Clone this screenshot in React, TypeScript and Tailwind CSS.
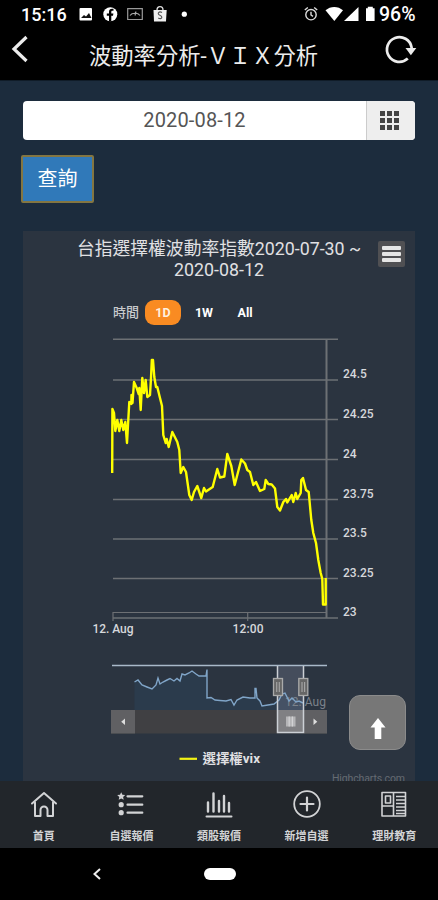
import type { ReactNode } from "react";

const VIX_LINE =
  "112.2,473 112.4,409 114,413 115.3,431 117.3,420 119.3,431 121.3,420 123.3,430 125.3,422 127,443 128,425 129.3,402 131.3,404 131.5,395 132.5,403 134,382 136.7,388 138.7,394 139.3,388 140.7,410 142.3,378 144,393 145.7,380 147.3,397 150,395 151,378 151.8,360 153,360 154.3,377 156,387 157.3,387 160,398 162,406 163.3,435 165.7,443 166.7,439 168.7,447 172.3,432 177.3,442 179.3,450 180.7,473 183.3,467 186,472 189.3,495 191.7,500 194,492 197.3,486 201.3,498 204,488 206,491.5 212.7,487 217.3,469 220,477.5 224.3,476.5 227.3,454 231.3,466 234.7,485 241.3,459.5 245,463.5 247.3,470 250,472 253.3,485 256,482 260,491 264.3,489 265.7,480 268.3,484 271.7,484.5 275,488.5 277.3,507 280,510.5 283.3,502 286,499 287.3,502.5 291.7,495 293.3,502 295.7,493 297.3,499 300.7,493 301.3,480 303,478 306,490 308.7,492 311.3,520 313.3,533 316,543 318.3,560 320.7,573 322.3,579 323,604.5 325.7,604.5 325.7,578";

const NAVIGATOR_LINE =
  "134.5,682 138,680 142,685 147,687 152,689 156,685 158,678 160,684 163,682 167,680 170,678.5 174,681 177,678.5 180,681 182,674 185,675 189,673 192,671 196,674 199,676 206,676 207,669.5 207,698 211,697.5 215,700 220,700.5 226,701 231,699.5 234,705 237,700 243,697 250,698 255,698 255,688.5 256,688.5 257,698 260,701 262,706 268,705 274,704 279,700 282,694 285,693 289,701 292,698 296,702 299,701 303,703";

const Y_AXIS = [
  { label: "24.5", y: 380 },
  { label: "24.25", y: 419.5 },
  { label: "24", y: 459.5 },
  { label: "23.75", y: 499.5 },
  { label: "23.5", y: 539 },
  { label: "23.25", y: 578.5 },
  { label: "23", y: 618 },
];

const stroke = { fill: "none", stroke: "currentColor", strokeLinecap: "round", strokeLinejoin: "round" } as const;

const TABS: { label: string; icon: ReactNode }[] = [
  {
    label: "首頁",
    icon: (
      <g {...stroke} strokeWidth="2">
        <path d="M3 13.5 15 3l12 10.5" />
        <path d="M6 12.5V26h5.5v-6a3.5 3.5 0 0 1 7 0v6H24V12.5" />
      </g>
    ),
  },
  {
    label: "自選報價",
    icon: (
      <g>
        <path d="m5.2 2.2 1.2 2.6 2.8.3-2.1 1.9.6 2.8-2.5-1.4-2.5 1.4.6-2.8-2.1-1.9 2.8-.3z" fill="currentColor" />
        <circle cx="5.2" cy="14.7" r="2.6" fill="currentColor" />
        <circle cx="5.2" cy="22.7" r="2.6" fill="currentColor" />
        <path d="M11.5 6.3h14.8M11.5 14.7h14.8M11.5 22.7h14.8" {...stroke} strokeWidth="2.2" />
      </g>
    ),
  },
  {
    label: "類股報價",
    icon: (
      <g {...stroke} strokeWidth="2.4">
        <path d="M4 21.5v-9M9.5 21.5V3.5M15 21.5V11M20 21.5V6M25 21.5V13" />
        <path d="M2.5 26.5h25" strokeWidth="2" />
      </g>
    ),
  },
  {
    label: "新增自選",
    icon: (
      <g {...stroke} strokeWidth="1.8">
        <circle cx="15" cy="14" r="12.8" />
        <path d="M15 7.5v13M8.5 14h13" strokeWidth="2.2" />
      </g>
    ),
  },
  {
    label: "理財教育",
    icon: (
      <g {...stroke} strokeLinecap="butt" strokeWidth="1.6">
        <path d="M3 2.5h23.5V26H3zM14.5 2.5V26" />
        <path d="M6.5 6h5v7h-5zM3 16h11.5" />
        <path d="M17 6.5h9M17 10h9M17 13.5h9M17 17h9M17 20.5h9M17 23.5h9" />
      </g>
    ),
  },
];

function StatusBar() {
  return (
    <div className="flex h-[30px] items-center pl-[21px] pr-[20px] text-white">
      <span className="w-[46px] whitespace-nowrap text-[18px] font-medium leading-[30px]">15:16</span>
      <svg className="ml-[9px]" width="115" height="20" viewBox="76 5 115 20">
        <rect x="79.5" y="8" width="12.5" height="12.5" rx="1" fill="#fff" />
        <path d="m81 18 3-3 2 1.5 3-3.5 2.5 5z" fill="#111" />
        <circle cx="110.3" cy="14.2" r="7" fill="#fff" />
        <path d="M109 21.5v-5.7h-2.2v-2.3h2.2v-1.6c0-2.1 1.2-3.2 3.1-3.2h1.4v2h-1.1c-.8 0-1.1.5-1.1 1.1v1.7h2.1l-.4 2.3h-1.7v5.7z" fill="#000" />
        <path d="M127.7 8.7h14.6v10.8h-14.6z" fill="none" stroke="#999" strokeWidth="1.2" />
        <path d="M130 15.5c2-3 8-3 10 0m-5 0 1-4" fill="none" stroke="#aaa" strokeWidth="1.1" />
        <path d="M153.5 10h13.2l-.7 11.5h-12z" fill="#eee" />
        <path d="M157 10c0-4.5 6-4.5 6 0" fill="none" stroke="#ddd" strokeWidth="1.3" />
        <path d="M162 12.5c-3-1.8-5.2 1-2.6 2.5 4 1.5 2.6 5-1.2 3" fill="none" stroke="#555" strokeWidth="1.1" />
        <circle cx="184.3" cy="14.2" r="2.6" fill="#fff" />
      </svg>
      <svg className="ml-auto" width="74" height="20" viewBox="302 5 74 20">
        <g fill="none" stroke="#ddd" strokeWidth="1.4">
          <circle cx="311" cy="14.7" r="5.2" />
          <path d="M311 11.8v3.2l2 1.4M304.8 10l3-2.5M317.2 10l-3-2.5" />
        </g>
        <path d="M325.5 10.3c5-4.5 12.5-4.5 17.5 0L334.3 21z" fill="#fff" />
        <path d="M358.5 7v14h-14.5z" fill="#fff" />
        <path d="M366 8.3h1.8V6.8h5v1.5h1.8V21H366z" fill="#fff" />
      </svg>
      <span className="ml-[3px] w-[39px] whitespace-nowrap text-[19.5px] font-medium leading-[30px]">96%</span>
    </div>
  );
}

function TitleBar() {
  return (
    <div className="flex h-[50px] items-start pl-[10px] text-[#ececec]">
      <svg className="mt-[3px]" width="22" height="32" viewBox="0 0 22 32">
        <path d="M16.5 4 4 16l12.5 12" fill="none" stroke="currentColor" strokeWidth="3.2" />
      </svg>
      <h1 className="ml-[57px] mt-[10px] w-[294px] whitespace-nowrap text-[22.3px] leading-[32px]">
        波動率分析-ＶＩＸ分析
      </h1>
      <svg className="mt-[4px]" width="34" height="32" viewBox="0 0 34 32">
        <path d="M24.8 24.6A12.4 12.4 0 1 1 28.6 13.5v3" fill="none" stroke="currentColor" strokeWidth="2.7" />
        <path d="M22.5 14h10.8l-5.4 7.2z" fill="currentColor" />
      </svg>
    </div>
  );
}

function VixChart() {
  return (
    <svg className="block" width="392" height="451" viewBox="23 330 392 451">
      {/* plot area */}
      <g stroke="#6d7074" strokeWidth="1.5">
        <path d="M113 339.3h225" />
        {Y_AXIS.map((tick) => (
          <path key={tick.label} d={`M113 ${tick.y}h225`} />
        ))}
        <path d="M326.5 339v279" strokeWidth="2" />
        <path d="M113 621v-8.5h213M247.7 612v9" fill="none" strokeWidth="1.2" />
      </g>
      <g fill="#d6d8dc" fontSize="12" fontWeight="500">
        {Y_AXIS.map((tick) => (
          <text key={tick.label} x="343" y={tick.y - 2}>
            {tick.label}
          </text>
        ))}
        <text x="92.5" y="633" textLength="41">12. Aug</text>
        <text x="232.5" y="633" textLength="31">12:00</text>
      </g>
      <polyline points={VIX_LINE} fill="none" stroke="#ffff00" strokeWidth="2.4" strokeLinejoin="round" />

      {/* navigator */}
      <polygon points={`134.5,710 ${NAVIGATOR_LINE} 303,710`} fill="#2b3b4c" />
      <path d="M112 665.5h215" stroke="#a9b9c9" strokeWidth="1.6" />
      <rect x="278" y="666" width="25.5" height="44" fill="#8087a0" opacity=".3" />
      <text x="285" y="706" fontSize="12" fill="#7b828b" textLength="41">12. Aug</text>
      <polyline points={NAVIGATOR_LINE} fill="none" stroke="#80a5c8" strokeWidth="1.4" />
      <rect x="111" y="710" width="216" height="23.5" fill="#404043" />
      <rect x="111" y="710" width="24" height="23.5" fill="#606063" />
      <rect x="304" y="710" width="23" height="23.5" fill="#606063" />
      <rect x="277.5" y="710" width="26" height="22.5" fill="#808083" />
      <path d="M125 718.5v6.5l-3.8-3.2zM313.5 718.5v6.5l3.8-3.2z" fill="#ddd" />
      <path d="M277.5 666v66.5h26V666" fill="none" stroke="#ccd0d5" strokeWidth="1.5" />
      <rect x="286" y="716.5" width="9.5" height="10" fill="#b5b5b7" />
      <path d="M289.2 716.5v10M292.4 716.5v10" stroke="#d2d2d4" strokeWidth="1.2" />
      {[278, 303.3].map((x) => (
        <g key={x}>
          <rect x={x - 4.5} y="678.5" width="9" height="17" fill="#666" stroke="#aaa" strokeWidth="1.3" />
          <path d={`M${x - 1.3} 682v10M${x + 1.3} 682v10`} stroke="#a3a3a3" strokeWidth="1.2" />
        </g>
      ))}

      {/* legend */}
      <path d="M179.5 758.8h17.5" stroke="#f3f314" strokeWidth="2.2" />
      <text x="202.5" y="763.3" fontSize="13" fontWeight="700" fill="#e0e0e3" textLength="57.5" lengthAdjust="spacingAndGlyphs">
        選擇權vix
      </text>
      <text x="332" y="782" fontSize="10.5" fill="#656b72" textLength="73">Highcharts.com</text>
    </svg>
  );
}

export default function App() {
  return (
    <div className="flex h-[900px] w-[438px] flex-col overflow-hidden bg-black font-['Roboto','Noto_Sans_CJK_TC',sans-serif]">
      <header className="h-20 shrink-0">
        <StatusBar />
        <TitleBar />
      </header>

      <main className="relative flex h-[701px] shrink-0 flex-col items-start overflow-hidden border-t border-[#101c28] bg-[#1c2c3d] px-[23px] pt-5">
        {/* Date picker */}
        <div className="flex h-[39px] w-full overflow-hidden rounded-[4px] bg-white">
          <div className="flex-1 text-center text-[20px] leading-[38px] tracking-[0.15px] text-[#555]">2020-08-12</div>
          <button type="button" className="flex w-[49px] items-center justify-center border-l border-[#ccc] bg-[#eee] pr-[3px]">
            <span className="grid grid-cols-3 gap-[2px]">
              {Array.from({ length: 9 }, (_, i) => (
                <span key={i} className="h-[5px] w-[5px] bg-[#444]" />
              ))}
            </span>
          </button>
        </div>
        <button
          type="button"
          className="-ml-[2px] mt-[15px] h-[48px] w-[73px] rounded-[2px] border-2 border-[#837642] bg-[#3079b9] text-[20px] leading-[44px] text-white"
        >
          查詢
        </button>

        {/* Chart card */}
        <section className="mt-[28px] w-full bg-[#2b3440]">
          <div className="relative h-[56px] pt-[7px] text-center text-[17.8px] leading-[21px] text-[#e0e0e3]">
            <h2 className="whitespace-nowrap">
              台指選擇權波動率指數2020-07-30 ~
              <br />
              2020-08-12
            </h2>
            <button
              type="button"
              className="absolute right-[10px] top-[10px] flex h-[26px] w-[27px] flex-col items-center justify-center gap-[2px] rounded-[2px] bg-[#505053]"
            >
              <span className="h-[4px] w-[19px] rounded-[1px] bg-[#e6e6e6]" />
              <span className="h-[4px] w-[19px] rounded-[1px] bg-[#e6e6e6]" />
              <span className="h-[4px] w-[19px] rounded-[1px] bg-[#e6e6e6]" />
            </button>
          </div>
          <div className="flex h-[43px] items-start pl-[90px] pt-[13px] text-[12.5px] font-bold leading-[25px] text-white">
            <span className="w-[32px] whitespace-nowrap text-[13px] font-medium leading-[25px] text-[#c8cacd]">時間</span>
            <button type="button" className="h-[25px] w-[36px] rounded-[9px] bg-[#f98b22] leading-[24px] text-[#fff0df]">1D</button>
            <button type="button" className="ml-[5px] h-[25px] w-[36px] leading-[24px]">1W</button>
            <button type="button" className="ml-[5px] h-[25px] w-[36px] leading-[24px]">All</button>
          </div>
          <VixChart />
        </section>

        <button
          type="button"
          className="absolute right-[32px] top-[614px] flex h-[55px] w-[57px] items-center justify-center rounded-[11px] border border-[#8b8b8b] bg-[#777777] pt-[13px] text-white"
        >
          <svg width="16" height="22" viewBox="0 0 16 22">
            <path d="M8 0l7.5 9.5h-4.2V21H4.7V9.5H.5z" fill="currentColor" />
          </svg>
        </button>
      </main>

      <nav className="grid h-[67px] shrink-0 grid-cols-5 bg-[#22262b] text-[#d2d3d5]">
        {TABS.map((tab) => (
          <div key={tab.label} className="flex flex-col items-center pt-[9px]">
            <svg width="30" height="29" viewBox="0 0 30 29">
              {tab.icon}
            </svg>
            <span className="mt-[10px] whitespace-nowrap text-[11px] font-bold leading-[16px]">{tab.label}</span>
          </div>
        ))}
      </nav>

      {/* Android system navigation */}
      <div className="flex h-[52px] shrink-0 items-center pl-[92px]">
        <svg width="10" height="12" viewBox="0 0 10 12">
          <path d="M8 1 2.5 6 8 11" fill="none" stroke="#eee" strokeWidth="2" />
        </svg>
        <span className="ml-[102px] h-[12px] w-[32px] rounded-full bg-white" />
      </div>
    </div>
  );
}
